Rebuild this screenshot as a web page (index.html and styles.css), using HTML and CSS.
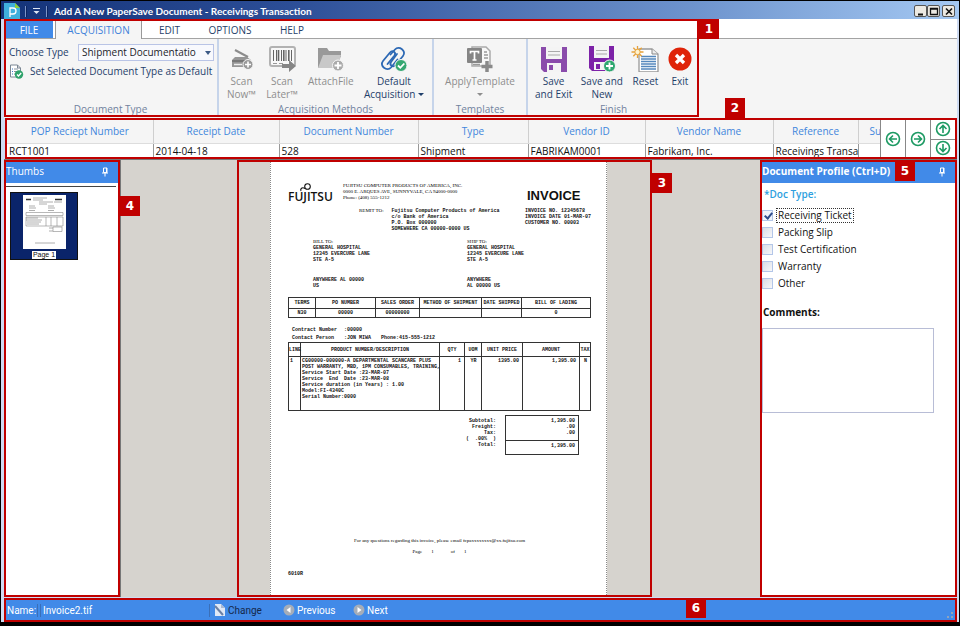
FILE: index.html
```html
<!DOCTYPE html>
<html lang="en">
<head>
<meta charset="utf-8">
<title>Add A New PaperSave Document - Receivings Transaction</title>
<link rel="stylesheet" href="styles.css">
</head>
<body>
<div class="window">
  <header class="titlebar">
    <svg class="app-icon" width="18" height="16" viewBox="0 0 18 16" aria-hidden="true">
      <path d="M1 0h11l5 5v11H1z" fill="#3fb0dc"/><path d="M12 0v5h5z" fill="#8fd13a"/>
      <path d="M7 14V5h3a2.500 2.500 0 0 1 0 6H7" fill="none" stroke="#fff" stroke-width="1.300"/>
    </svg>
    <span class="grip"></span>
    <svg class="quick" width="9" height="8" viewBox="0 0 9 8" aria-hidden="true"><path d="M1 1.500h7" stroke="#dfe6f5"/><path d="M1.500 4h6L4.500 7z" fill="#dfe6f5"/></svg>
    <span class="grip"></span>
    <h1>Add A New PaperSave Document - Receivings Transaction</h1>
    <div class="win-buttons">
      <button aria-label="Minimize"><svg width="10" height="9" viewBox="0 0 10 9"><path d="M2 7.500h5" stroke="#111" stroke-width="2"/></svg></button>
      <button aria-label="Maximize"><svg width="10" height="9" viewBox="0 0 10 9"><path d="M1.500 1.500h7v6h-7zM1 2h8" fill="none" stroke="#111" stroke-width="1.300"/></svg></button>
      <button class="close" aria-label="Close"><svg width="10" height="9" viewBox="0 0 10 9"><path d="M2 1.500l6 6M8 1.500l-6 6" stroke="#111" stroke-width="1.600"/></svg></button>
    </div>
  </header>

  <div class="client">
    <section class="ribbon">
      <div class="ribbon-main callout">
        <nav class="tabs">
          <button class="tab file">FILE</button>
          <button class="tab active">ACQUISITION</button>
          <button class="tab edit">EDIT</button>
          <button class="tab options">OPTIONS</button>
          <button class="tab help">HELP</button>
        </nav>
        <div class="groups">
          <section class="group g-type">
            <div class="type-row">
              <label for="doctype">Choose Type</label>
              <select id="doctype"><option>Shipment Documentatio</option></select>
            </div>
            <button class="set-default">
              <svg width="15" height="15" viewBox="0 0 15 15" aria-hidden="true">
                <path d="M1.500 1h7l3 3v9h-10z" fill="#fff" stroke="#7b8794"/><path d="M8.500 1v3h3" fill="none" stroke="#7b8794"/>
                <path d="M3 5h1M3 7.500h1M3 10h1" stroke="#3b78c8"/><path d="M5 5h4M5 7.500h3M5 10h2" stroke="#8894a0"/>
                <circle cx="10" cy="10.500" r="4.200" fill="#2fa36b"/><path d="M8 10.500l1.500 1.500 2.700-3" fill="none" stroke="#fff" stroke-width="1.300"/>
              </svg>
              Set Selected Document Type as Default
            </button>
            <h2>Document Type</h2>
          </section>
          <section class="group g-acq">
            <div class="tools">
              <button class="tool off">
                <svg width="28" height="26" viewBox="0 0 28 26" aria-hidden="true"><path d="M7 4l13 7" stroke="#8c8c8c" stroke-width="2"/><path d="M4 14l3-3h12l4 3v7H4z" fill="#969696"/><path d="M4 15h17" stroke="#777" stroke-width="2"/><path d="M6 18.500h8" stroke="#eee" stroke-width="1.500"/><circle cx="20" cy="18.500" r="5" fill="#999" stroke="#f5f5f5"/><path d="M20 15.500v6M17 18.500h6" stroke="#fff" stroke-width="1.600"/></svg>
                <span>Scan<br>Now™</span></button>
              <button class="tool off">
                <svg width="28" height="26" viewBox="0 0 28 26" aria-hidden="true"><rect x="2" y="1" width="25" height="19" rx="2" fill="#f8f8f8" stroke="#b2b2b2" stroke-width="2"/><path d="M5.500 4v11M8.500 4v11M13.500 4v11M18 4v11M23.500 4v11" stroke="#666"/><path d="M10.500 4v11M15.800 4v11M20.800 4v11" stroke="#666" stroke-width="1.600"/><path d="M5 17.500h4M11 17.500h4" stroke="#999"/><path d="M14 18h7v-4l7 6-7 6v-4h-7z" fill="#858585"/></svg>
                <span>Scan<br>Later™</span></button>
              <button class="tool off">
                <svg width="28" height="26" viewBox="0 0 28 26" aria-hidden="true"><path d="M1 22V2h9l2 3h12v6" fill="#999"/><path d="M6 9h18l-3 13H1z" fill="#c8c8c8"/><circle cx="21" cy="19.500" r="5.500" fill="#aaa" stroke="#f5f5f5"/><path d="M21 16v7M17.500 19.500h7" stroke="#fff" stroke-width="1.800"/></svg>
                <span>AttachFile</span></button>
              <button class="tool">
                <svg width="28" height="26" viewBox="0 0 28 26" aria-hidden="true"><g fill="none" stroke="#2c68b4" stroke-width="1.800" stroke-linecap="round"><path d="M10.500 8.500L15 3.500c4-4.500 12 1.500 8 6.500l-7.500 9c-2.500 3-6.500 0-4.500-3L17 8"/><path d="M17.500 13.500L11 21.500c-4 4.500-12-1.500-8-6.500L10 6.500c2.500-3 6.500 0 4.500 3L7.500 18"/></g><circle cx="21" cy="19.500" r="6" fill="#35a872" stroke="#f5f5f5"/><path d="M18 19.500l2.300 2.300 4-4.300" fill="none" stroke="#fff" stroke-width="1.800"/></svg>
                <span>Default<br>Acquisition <i class="caret"></i></span></button>
            </div>
            <h2>Acquisition Methods</h2>
          </section>
          <section class="group g-tpl">
            <div class="tools">
              <button class="tool off">
                <svg width="28" height="26" viewBox="0 0 28 26" aria-hidden="true"><path d="M6 5V1h14l4 4v15H6z" fill="#f8f8f8" stroke="#aaa" stroke-width="1.500"/><path d="M18 6h3M18 9h4M18 12h4M7 18.500h7" stroke="#999" stroke-width="1.500"/><rect x="1" y="2" width="15" height="15" rx="1" fill="#858585"/><path d="M4.500 7.500v-2h8v2M8.500 5.500v9M6.500 14h4" fill="none" stroke="#fff" stroke-width="1.700"/><path d="M21 15v11M15.500 20.500h11" stroke="#8a8a8a" stroke-width="3.500"/></svg>
                <span>ApplyTemplate<br><i class="caret"></i></span></button>
            </div>
            <h2>Templates</h2>
          </section>
          <section class="group g-fin">
            <div class="tools">
              <button class="tool">
                <svg width="28" height="26" viewBox="0 0 28 26" aria-hidden="true"><path d="M1 1h26v25H4l-3-3z" fill="#8a4bab"/><path d="M6 1h16v12H6z" fill="#f4f4f4"/><path d="M8 5.500h12M8 9h12" stroke="#aaa"/><path d="M7 17h14v9H7z" fill="#f4f4f4"/><path d="M9 19h4v5H9z" fill="#8a4bab"/></svg>
                <span>Save<br>and Exit</span></button>
              <button class="tool">
                <svg width="28" height="26" viewBox="0 0 28 26" aria-hidden="true"><path d="M1 0h25v25H4l-3-3z" fill="#7d22a8"/><path d="M6 0h15v12H6z" fill="#f4f4f4"/><path d="M8 4.500h11M8 8h11" stroke="#aaa"/><path d="M6 16h12v8H6z" fill="#f4f4f4"/><path d="M8 18h4v5H8z" fill="#7d22a8"/><circle cx="21.500" cy="20" r="6" fill="#2fa870" stroke="#f5f5f5"/><path d="M21.500 16.500v7M18 20h7" stroke="#fff" stroke-width="1.800"/></svg>
                <span>Save and<br>New</span></button>
              <button class="tool">
                <svg width="28" height="26" viewBox="0 0 28 26" aria-hidden="true"><path d="M8 3h13l6 5v18H8z" fill="#fff" stroke="#999" stroke-width="1.300"/><path d="M21 3v5h6" fill="#eee" stroke="#888"/><path d="M10 10.500h15M10 13h15M10 15.500h15M10 18h15M10 20.500h15M10 23h15" stroke="#5588bd" stroke-width="1.400"/><path d="M6.500 0v12M.5 6h12M2.300 1.800l8.400 8.400M10.700 1.800l-8.400 8.400" stroke="#e6a23c" stroke-width="1.300"/><circle cx="6.500" cy="6" r="2.700" fill="#fff3cf" stroke="#e6a23c"/></svg>
                <span>Reset</span></button>
              <button class="tool exit">
                <svg width="24" height="26" viewBox="2 0 24 26" aria-hidden="true"><circle cx="14" cy="13" r="11.500" fill="#df2409"/><path d="M10 9l8 8M18 9l-8 8" stroke="#fff" stroke-width="3.300"/></svg>
                <span>Exit</span></button>
            </div>
            <h2>Finish</h2>
          </section>
        </div>
        <span class="badge b1">1</span>
      </div>
    </section>

    <section class="records callout">
      <div class="record-scroll">
        <table class="record-table">
          <colgroup><col class="c1"><col class="c2"><col class="c3"><col class="c4"><col class="c5"><col class="c6"><col class="c7"><col class="c8"></colgroup>
          <thead><tr><th>POP Reciept Number</th><th>Receipt Date</th><th>Document Number</th><th>Type</th><th>Vendor ID</th><th>Vendor Name</th><th>Reference</th><th class="cut">Su</th></tr></thead>
          <tbody><tr><td>RCT1001</td><td>2014-04-18</td><td>528</td><td>Shipment</td><td>FABRIKAM0001</td><td>Fabrikam, Inc.</td><td>Receivings Transa</td><td></td></tr></tbody>
        </table>
      </div>
      <div class="record-nav">
        <button aria-label="Previous record"><svg width="16" height="16" viewBox="0 0 16 16"><circle cx="8" cy="8" r="6.500"/><path d="M12 8H5M8 4.500L4.500 8 8 11.500"/></svg></button>
        <button aria-label="Next record"><svg width="16" height="16" viewBox="0 0 16 16"><circle cx="8" cy="8" r="6.500"/><path d="M4 8h7M8 4.500L11.500 8 8 11.500"/></svg></button>
        <div class="nav-stack">
          <button aria-label="First record"><svg width="16" height="16" viewBox="0 0 16 16"><circle cx="8" cy="8" r="6.500"/><path d="M8 12V5M4.500 8L8 4.500 11.500 8"/></svg></button>
          <button aria-label="Last record"><svg width="16" height="16" viewBox="0 0 16 16"><circle cx="8" cy="8" r="6.500"/><path d="M8 4v7M4.500 8L8 11.500 11.500 8"/></svg></button>
        </div>
      </div>
      <span class="badge b2">2</span>
    </section>

    <main class="workspace">
      <aside class="thumbs callout">
        <div class="panel-head"><h2>Thumbs</h2>
          <button aria-label="Pin thumbs"><svg width="8" height="10" viewBox="0 0 8 10"><path d="M2.500 1h3.500v4.500h-3.500zM1 6h6M4 6v3.500M5.500 1v4.500" fill="none" stroke="#fff"/></svg></button></div>
        <div class="thumb-list">
          <figure class="thumb">
            <svg width="43" height="54" viewBox="0 0 43 54" aria-hidden="true"><path d="M0 0h43v54H0z" fill="#fff"/>
              <path d="M3 4.500h5M32 4.500h7" stroke="#333" stroke-width="1.500"/>
              <path d="M10 3h14M10 5h10M16 7h14M16 9h8M31 7h8M6 11h6M6 13h7M25 11h6M25 13h7M6 15.500h6M25 15.500h6M3 23h12M3 25h16M4 27h14M4 29h12M26 33h4M26 36h4M12 48h20" stroke="#999" stroke-width=".800"/>
              <path d="M3 17.500h37v3H3zM3 22h37v9H3zM23 22v9M28 22v9M34 22v9M30 32h9v4.500h-9z" fill="none" stroke="#888" stroke-width=".600"/></svg>
            <figcaption>Page 1</figcaption>
          </figure>
        </div>
        <span class="badge b4">4</span>
      </aside>

      <section class="viewer">
        <div class="sheet-area callout">
          <article class="sheet">
            <div class="inv-head">
              <div class="logo">
                <svg width="14" height="9" viewBox="0 0 14 9" aria-hidden="true"><g fill="none" stroke="#111" stroke-width="1.100"><circle cx="8.500" cy="3.500" r="2.800"/><path d="M6 5.500c-3-2-5 .500-4 2.500"/></g></svg>
                <span>FUJITSU</span>
              </div>
              <div class="company">
                <p class="serif">FUJITSU COMPUTER PRODUCTS OF AMERICA, INC.<br>0000 E. ARQUES AVE, SUNNYVALE, CA 94000-0000<br>Phone: (408) 555-1212</p>
                <div class="remit"><span class="serif">REMIT TO:</span>
                  <p>Fujitsu Computer Products of America<br>c/o Bank of America<br>P.O. Box 000000<br>SOMEWHERE CA 00000-0000 US</p></div>
              </div>
              <div class="inv-id"><h3>INVOICE</h3><p>INVOICE NO. 12345678<br>INVOICE DATE 01-MAR-07<br>CUSTOMER NO. 00003</p></div>
            </div>
            <div class="parties">
              <div><span class="serif">BILL TO:</span><p>GENERAL HOSPITAL<br>12345 EVERCURE LANE<br>STE A-5</p><p class="city">ANYWHERE AL 00000<br>US</p></div>
              <div><span class="serif">SHIP TO:</span><p>GENERAL HOSPITAL<br>12345 EVERCURE LANE<br>STE A-5</p><p class="city">ANYWHERE<br>AL 00000 US</p></div>
            </div>
            <table class="inv-table terms">
              <colgroup><col class="t1"><col class="t2"><col class="t3"><col class="t4"><col class="t5"><col></colgroup>
              <tr><th>TERMS</th><th>PO NUMBER</th><th>SALES ORDER</th><th>METHOD OF SHIPMENT</th><th>DATE SHIPPED</th><th>BILL OF LADING</th></tr>
              <tr><td>N30</td><td>00000</td><td>00000000</td><td></td><td></td><td>0</td></tr>
            </table>
            <div class="contract"><span>Contract Number</span><span>:00000</span><span></span><span>Contact Person</span><span>:JON MIWA</span><span>Phone:415-555-1212</span></div>
            <table class="inv-table items">
              <colgroup><col class="i1"><col class="i2"><col class="i3"><col class="i4"><col class="i5"><col class="i6"><col></colgroup>
              <tr><th>LINE</th><th>PRODUCT NUMBER/DESCRIPTION</th><th>QTY</th><th>UOM</th><th>UNIT PRICE</th><th>AMOUNT</th><th>TAX</th></tr>
              <tr><td>1</td><td>CG00000-000000-A DEPARTMENTAL SCANCARE PLUS<br>POST WARRANTY, MBD, 1PM CONSUMABLES, TRAINING,<br>Service Start Date :23-MAR-07<br>Service  End  Date :23-MAR-08<br>Service duration (in Years) : 1.00<br>Model:FI-4340C<br>Serial Number:0000</td><td class="num">1</td><td class="mid">YR</td><td class="num">1395.00</td><td class="num">1,395.00</td><td class="mid">N</td></tr>
            </table>
            <div class="totals">
              <p>Subtotal:<br>Freight:<br>Tax:<br>(  .00%  )<br>Total:</p>
              <div class="total-box"><p>1,395.00<br>.00<br>.00</p><p class="grand">1,395.00</p></div>
            </div>
            <footer class="inv-foot serif">
              <p>For any questions regarding this invoice, please email fcpaxxxxxxxx@xx.fujitsu.com</p>
              <p class="pages"><span>Page</span><span>1</span><span class="of">of</span><span>1</span></p>
            </footer>
            <p class="form-code">6010R</p>
          </article>
          <span class="badge b3">3</span>
        </div>
      </section>

      <aside class="profile callout">
        <div class="panel-head"><h2 class="strong">Document Profile (Ctrl+D)</h2>
          <button aria-label="Pin profile"><svg width="8" height="10" viewBox="0 0 8 10"><path d="M2.500 1h3.500v4.500h-3.500zM1 6h6M4 6v3.500M5.500 1v4.500" fill="none" stroke="#fff"/></svg></button></div>
        <fieldset>
          <legend>*Doc Type:</legend>
          <label class="check"><input type="checkbox" checked><span class="focused">Receiving Ticket</span></label>
          <label class="check"><input type="checkbox"><span>Packing Slip</span></label>
          <label class="check"><input type="checkbox"><span>Test Certification</span></label>
          <label class="check"><input type="checkbox"><span>Warranty</span></label>
          <label class="check"><input type="checkbox"><span>Other</span></label>
        </fieldset>
        <label class="comments-label" for="comments">Comments:</label>
        <textarea id="comments"></textarea>
        <span class="badge b5">5</span>
      </aside>
    </main>

    <footer class="status callout">
      <span class="name-label">Name:</span>
      <span class="name-value">Invoice2.tif</span>
      <button class="change"><svg width="12" height="14" viewBox="0 0 12 14" aria-hidden="true"><path d="M1 1h6l4 4v8H1z" fill="#dfe8f6"/><path d="M7 1v4h4z" fill="#a9b9d3"/><path d="M1 3l8 9" stroke="#6b80a5" stroke-width="2"/></svg>Change</button>
      <button class="prev"><svg width="12" height="12" viewBox="0 0 12 12" aria-hidden="true"><circle cx="6" cy="6" r="5.500" fill="#a5adb8"/><path d="M7.500 3v6L3.500 6z" fill="#fff"/></svg>Previous</button>
      <button class="next"><svg width="12" height="12" viewBox="0 0 12 12" aria-hidden="true"><circle cx="6" cy="6" r="5.500" fill="#a5adb8"/><path d="M4.500 3v6l4-3z" fill="#fff"/></svg>Next</button>
      <svg class="resize" width="6" height="6" viewBox="0 0 6 6" aria-hidden="true"><path d="M4 0h2v2H4zM4 4h2v2H4zM0 4h2v2H0z" fill="#8fa3bd"/></svg>
      <span class="badge b6">6</span>
    </footer>
  </div>
</div>
</body>
</html>
```
FILE: styles.css
```css
:root {
  --blue: #418ae8;
  --red: #c00000;
  --navy: #1f3f6b;
}
* { box-sizing: border-box; }
body {
  margin: 0;
  font: 10px/13px "Open Sans", "Noto Sans", sans-serif;
  color: #111;
}
h1, h2, h3, p, figure, fieldset { margin: 0; padding: 0; border: 0; font-size: inherit; font-weight: 400; }
button { margin: 0; padding: 0; border: 0; background: none; font: inherit; color: inherit; }
svg { display: block; flex: none; }

.window {
  display: flex;
  flex-direction: column;
  min-height: 100vh;
  border: 1px solid #000;
  border-bottom-width: 4px;
  background: #cfdcf3;
}
.titlebar {
  display: flex;
  align-items: center;
  gap: 4px;
  height: 18px;
  padding: 2px 4px 0 2px;
  background: linear-gradient(90deg, #143379 0%, #2c4e97 30%, #6d93cd 72%, #a4c8f2 100%);
  color: #fff;
}
.titlebar h1 { margin-left: 2px; font-family: Lato, sans-serif; font-weight: 700; }
.app-icon { align-self: flex-end; }
.quick { margin: 0 1px; }
.grip { width: 2px; height: 11px; border-left: 1px solid #7d95c8; border-right: 1px solid #0b2461; }
.win-buttons { display: flex; margin-left: auto; }
.win-buttons button {
  display: grid;
  place-items: center;
  width: 13px;
  height: 12px;
  border: 1px solid #555;
  border-radius: 2px;
  background: #ece9e2;
}
.win-buttons .close { margin-left: 2px; }

.client { flex: 1; display: flex; flex-direction: column; padding: 0 2px 0 3px; }

.callout { position: relative; }
.callout::after {
  content: "";
  position: absolute;
  inset: 0;
  border: 2px solid var(--red);
  pointer-events: none;
}
.badge {
  position: absolute;
  z-index: 2;
  width: 20px;
  height: 20px;
  background: var(--red);
  color: #fff;
  font: 700 12px/20px "DejaVu Sans", sans-serif;
  text-align: center;
}
.b1 { left: 100%; top: 0; }
.b2 { left: 720px; bottom: 100%; }
.b3 { left: 100%; top: 13px; }
.b4 { left: 100%; top: 36px; }
.b5 { right: 42px; top: 1px; }
.b6 { left: 682px; top: 0; }

/* Ribbon */
.ribbon {
  display: flex;
  padding-bottom: 1px;
  background: linear-gradient(#fff 0 19px, #a3a3a3 19px 20px, #f5f5f5 20px);
}
.tabs { display: flex; height: 20px; padding-left: 1px; }
.tab { height: 19px; padding-top: 3px; color: var(--navy); }
.file { width: 48px; background: var(--blue); color: #fff; }
.active {
  width: 87px;
  height: 20px;
  margin-left: 2px;
  border: solid #999;
  border-width: 0 1px;
  background: #f5f5f5;
  color: #3f82da;
}
.edit { width: 55px; }
.options { width: 66px; }
.help { width: 58px; }
.groups { display: flex; }
.group {
  display: flex;
  flex-direction: column;
  height: 78px;
  padding: 5px 3px 2px;
  border-right: 2px solid #c6d4ea;
}
.group h2 { margin-top: auto; text-align: center; color: #71829e; line-height: 12px; }
.g-type { width: 215px; }
.g-acq { width: 215px; }
.g-tpl { width: 94px; }
.g-fin { width: 171px; border-right: 0; }
.type-row {
  position: relative;
  display: flex;
  justify-content: space-between;
  align-items: center;
  padding-left: 2px;
  color: var(--navy);
}
.type-row::after {
  content: "";
  position: absolute;
  right: 3px;
  top: 7px;
  border: solid transparent;
  border-width: 4px 3px 0;
  border-top-color: #3c5a86;
}
select {
  appearance: none;
  width: 136px;
  height: 17px;
  padding: 0 14px 0 3px;
  border: 1px solid #b9c4e6;
  border-radius: 0;
  background: #f8f9fd;
  font: inherit;
  color: #1c1c2a;
}
.set-default { display: flex; align-items: center; gap: 6px; margin-top: 3px; padding-left: 2px; color: var(--navy); white-space: nowrap; }
.tools { display: flex; justify-content: space-around; padding-top: 2px; }
.g-fin .tools { justify-content: space-between; padding: 2px 4px 0; }
.tool { display: flex; flex-direction: column; align-items: center; gap: 3px; color: var(--navy); white-space: nowrap; line-height: 13px; }
.tool.off { color: #8e8e8e; }
.caret { display: inline-block; border: solid transparent; border-width: 3px 3px 0; border-top-color: currentColor; vertical-align: 2px; }

/* Record grid */
.records { display: flex; height: 41px; margin-left: 1px; padding: 2px; background: #fff; }
.record-scroll { flex: 1; min-width: 0; overflow: hidden; background: #f5f5f5; }
.record-table { table-layout: fixed; width: 912px; border-collapse: collapse; }
.record-table th, .record-table td { padding: 0 3px; border-right: 1px solid #cfcfcf; white-space: nowrap; }
.record-table th { height: 23px; background: #f5f5f5; border-bottom: 1px solid #ddd; color: #4186dc; font-weight: 400; text-align: center; }
.record-table td { height: 14px; padding: 0 2px; background: #fff; border-right-color: #999; line-height: 14px; }
.record-table .cut { padding-left: 11px; text-align: left; }
.c1 { width: 146px; } .c2 { width: 126px; } .c3 { width: 139px; } .c4 { width: 110px; }
.c5 { width: 117px; } .c6 { width: 128px; } .c7 { width: 85px; } .c8 { width: 61px; }
.record-nav { display: flex; }
.record-nav button { display: grid; place-items: center; width: 25px; border-left: 1px solid #888; background: #fff; }
.record-nav svg { fill: none; stroke: #1d9a63; stroke-width: 1.6; }
.nav-stack { display: grid; grid-template-rows: 1fr 1fr; }
.nav-stack button + button { border-top: 1px solid #888; }

/* Workspace */
.workspace { flex: 1; display: flex; border-top: 1px solid #777; }
.panel-head {
  display: flex;
  align-items: center;
  justify-content: space-between;
  height: 23px;
  padding: 0 11px 0 2px;
  background: var(--blue);
  color: #fff;
}
.panel-head .strong { font-weight: 700; }
.thumbs { width: 116px; background: #fff; }
.thumb-list { margin: 3px 4px 0 2px; padding: 5px 4px; border-top: 1px solid #444; }
.thumb {
  display: flex;
  flex-direction: column;
  align-items: center;
  width: 68px;
  height: 68px;
  padding-top: 2px;
  border: 1px solid #111;
  background: #0a246a;
}
.thumb figcaption { margin-top: 2px; padding: 0 1px; background: #fff; font: 7px/8px "Liberation Sans", sans-serif; }
.viewer { flex: 1; display: flex; justify-content: flex-start; background: #d6d3ce; border-left: 1px solid #777; }
.sheet-area { width: 415px; margin-left: 116px; padding: 2px 45px 2px 33px; }
.sheet {
  display: flex;
  flex-direction: column;
  height: 100%;
  padding: 21px 15px 18px 17px;
  border: dotted #8a8a8a;
  border-width: 0 1px;
  background: #fff;
  font: 700 5px/6px "Liberation Mono", monospace;
  white-space: nowrap;
}
.sheet p { font-weight: inherit; }
.sheet .serif { font-family: "Liberation Serif", serif; font-weight: 400; color: #000; }
.inv-head { display: grid; grid-template-columns: 55px 1fr 66px; }
.logo { font: 600 12px/14px "Open Sans", sans-serif; }
.logo svg { margin-left: 11px; }
.logo span { display: block; margin-top: -2px; }
.remit { display: flex; gap: 8px; margin: 7px 0 0 16px; }
.inv-id { padding-top: 5px; }
.inv-id h3 { margin: 0 0 5px 2px; font: 700 13px/15px "Liberation Sans", sans-serif; }
.parties { display: grid; grid-template-columns: 154px 1fr; margin: 7px 0 8px 25px; }
.parties .city { margin-top: 14px; }
.inv-table { table-layout: fixed; width: 100%; border-collapse: collapse; }
.inv-table th, .inv-table td { padding: 0; border: 1px solid #333; overflow: visible; }
.terms th { height: 11px; }
.terms td { height: 9px; text-align: center; }
.t1 { width: 27px; } .t2 { width: 60px; } .t3 { width: 44px; } .t4 { width: 62px; } .t5 { width: 40px; }
.contract { display: grid; grid-template-columns: 52px 37px 1fr; row-gap: 2px; margin: 9px 0 1px 4px; }
.items th { height: 14px; }
.items td { height: 54px; padding: 1px 0 1px 1px; vertical-align: top; white-space: pre; }
.items .num { padding-right: 3px; text-align: right; }
.items .mid { text-align: center; }
.i1 { width: 12px; } .i2 { width: 139px; } .i3 { width: 25px; } .i4 { width: 17px; } .i5 { width: 41px; } .i6 { width: 57px; }
.totals { display: flex; justify-content: flex-end; gap: 9px; margin: 4px 12px 0 0; text-align: right; white-space: pre; }
.totals > p { padding-top: 3px; }
.total-box { width: 74px; border: 1px solid #333; }
.total-box p { padding: 2px 3px 4px; }
.total-box .grand { padding: 2px 3px 5px; border-top: 1px solid #333; }
.inv-foot { margin-top: auto; text-align: center; }
.pages { display: flex; justify-content: center; gap: 9px; margin-top: 5px; }
.pages .of { margin-left: 8px; }
.form-code { margin-top: 16px; }

/* Document profile */
.profile { width: 197px; background: #fff; }
.profile fieldset { padding: 0 2px; }
.profile legend { margin: 0 0 6px; padding: 5px 2px 0; color: #2e9fe0; font-weight: 600; }
.check { display: flex; align-items: center; gap: 3px; height: 17px; }
.check span { padding: 0 1px; border: 1px solid transparent; }
.check .focused { border: 1px dotted #333; }
.check input {
  appearance: none;
  width: 11px;
  height: 11px;
  margin: 0;
  border: 1px solid #b3c6e8;
  background: linear-gradient(135deg, #d8dde6, #f7f7f9);
}
.check input:checked { background: #eef3fb; position: relative; }
.check input:checked::after {
  content: "";
  position: absolute;
  left: 3px;
  top: 0;
  width: 3px;
  height: 6px;
  border: solid #2d4c8c;
  border-width: 0 2px 2px 0;
  transform: rotate(40deg);
}
.comments-label { display: block; margin: 14px 0 9px 3px; font-weight: 700; }
textarea { display: block; width: 172px; height: 85px; margin-left: 2px; border: 1px solid #b8bdd6; resize: none; font: inherit; }

/* Status bar */
.status {
  display: flex;
  align-items: center;
  height: 24px;
  margin-top: 1px;
  background: var(--blue);
  color: #fff;
  font-family: Roboto, sans-serif;
}
.name-label { width: 34px; padding-left: 3px; border-right: 1px solid #3a6fb8; }
.name-value { width: 170px; margin-left: 2px; padding-left: 2px; border-left: 1px solid #3a6fb8; border-right: 1px solid #3a6fb8; }
.status button { display: flex; align-items: center; gap: 2px; }
.change { width: 73px; padding-left: 4px; color: #14284a; }
.prev { width: 70px; }
.resize { margin: auto 4px 4px auto; }
```
